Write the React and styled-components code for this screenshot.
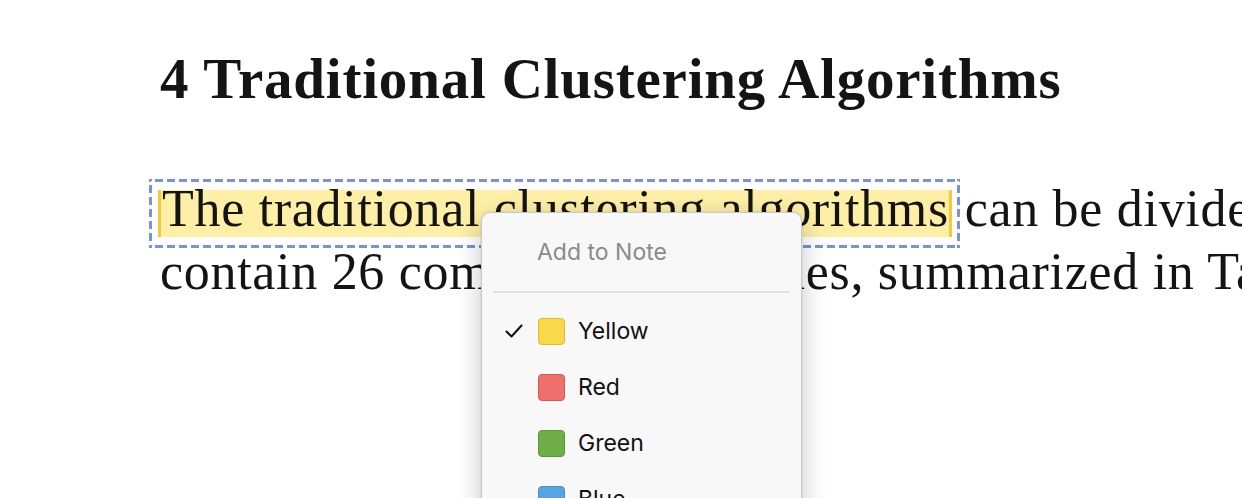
import styled, { createGlobalStyle } from 'styled-components';

const GlobalStyle = createGlobalStyle`
  html, body {
    margin: 0;
    padding: 0;
    background: #ffffff;
    overflow: hidden;
  }
`

const Page = styled.div`
  position: relative;
  width: 1242px;
  height: 498px;
  overflow: hidden;
  padding: 45px 0 0 160px;
  box-sizing: border-box;
  color: #141414;
  font-family: "Liberation Serif", "Times New Roman", serif;
`

const Heading = styled.h1`
  margin: 0 0 64px;
  font-size: 57px;
  line-height: 68px;
  font-weight: 700;
  letter-spacing: 0.8px;
  white-space: nowrap;
`

const Paragraph = styled.div`
  font-size: 52px;
  line-height: 63px;
  letter-spacing: 0.7px;
  white-space: nowrap;
`

const Line = styled.div`
  height: 63px;
`

const dash = '#7892db'

// dashed selection outline, drawn as gradients so the dash length matches
const SelectionFrame = styled.span`
  display: inline-block;
  margin: 0 -9px -8px -11px;
  padding: 11px 8px 11px 9px;
  line-height: 0;
  background-image:
    linear-gradient(90deg, ${dash} 0, ${dash} 8px, transparent 8px, transparent 12px),
    linear-gradient(90deg, ${dash} 0, ${dash} 8px, transparent 8px, transparent 12px),
    linear-gradient(180deg, ${dash} 0, ${dash} 8px, transparent 8px, transparent 12px),
    linear-gradient(180deg, ${dash} 0, ${dash} 8px, transparent 8px, transparent 12px);
  background-size: 12px 3px, 12px 3px, 3px 12px, 3px 12px;
  background-position: 6px top, 6px bottom, left 6px, right 6px;
  background-repeat: repeat-x, repeat-x, repeat-y, repeat-y;
`

const Highlight = styled.span`
  display: inline-block;
  line-height: 37px;
  padding: 0 0 10px 1px;
  background: #fdefa6;
  border-left: 3px solid #f6c93c;
  border-right: 3px solid #f6c93c;
`

const Menu = styled.div`
  position: absolute;
  left: 481px;
  top: 212px;
  width: 321px;
  height: 320px;
  box-sizing: border-box;
  padding: 11px 11px 0;
  background: #f8f8f8;
  border: 1px solid #c9c9c9;
  border-radius: 9px;
  box-shadow: 0 8px 26px rgba(0, 0, 0, 0.22), 0 0 2px rgba(0, 0, 0, 0.12);
  font-family: Inter, "Noto Sans", sans-serif;
`

const MenuTitle = styled.div`
  height: 56px;
  padding-left: 44px;
  display: flex;
  align-items: center;
  font-size: 23px;
  color: #8a8a8a;
`

const Separator = styled.div`
  height: 2px;
  background: #e4e2de;
  margin: 11px 0 10px;
`

const MenuItem = styled.div`
  height: 56px;
  display: flex;
  align-items: center;
  gap: 13px;
  font-size: 23px;
  color: #111111;
`

const Check = styled.span`
  width: 32px;
  display: flex;
  justify-content: center;
  padding-left: 10px;
  box-sizing: border-box;
`

const Swatch = styled.span`
  width: 27px;
  height: 27px;
  box-sizing: border-box;
  border-radius: 4px;
  background: ${p => p.color};
  border: 1px solid ${p => p.edge};
`

const colors = [
  { name: 'Yellow', color: '#f9d84a', edge: '#e2bb3a', checked: true },
  { name: 'Red', color: '#ee6f6b', edge: '#d55a57' },
  { name: 'Green', color: '#6fae47', edge: '#5c983a' },
  { name: 'Blue', color: '#56a5e2', edge: '#4690cc' },
]

function App() {
  return (
    <Page>
      <GlobalStyle />
      <Heading>4 Traditional Clustering Algorithms</Heading>
      <Paragraph>
        <Line>
          <SelectionFrame>
            <Highlight>The traditional clustering algorithms</Highlight>
          </SelectionFrame>{' '}
          can be divided into 9 categories which
        </Line>
        <Line>contain 26 commonly used ones, summarized in Table 2.</Line>
      </Paragraph>
      <Menu>
        <MenuTitle>Add to Note</MenuTitle>
        <Separator />
        {colors.map(c => (
          <MenuItem key={c.name}>
            <Check>
              {c.checked && (
                <svg width="18" height="14" viewBox="0 0 18 14">
                  <path d="M1.5 7.5 L6.5 12.5 L16.5 1.5" fill="none" stroke="#111" strokeWidth="2" strokeLinecap="round" strokeLinejoin="round" />
                </svg>
              )}
            </Check>
            <Swatch color={c.color} edge={c.edge} />
            {c.name}
          </MenuItem>
        ))}
      </Menu>
    </Page>
  );
}

export default App;
